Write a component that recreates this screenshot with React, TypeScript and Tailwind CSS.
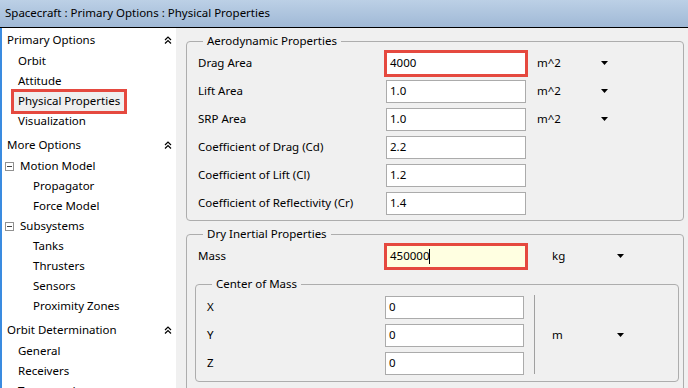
import type { ReactNode } from "react";

const font = { fontFamily: '"Segoe UI", "Noto Sans", "Liberation Sans", sans-serif' };

function CollapseIcon() {
  return (
    <svg width="8" height="8" viewBox="0 0 8 8" className="shrink-0">
      <path d="M1 4 L4 1 L7 4 M1 7.5 L4 4.5 L7 7.5" fill="none" stroke="#000" strokeWidth="1.2" />
    </svg>
  );
}

function MinusBox() {
  return (
    <span className="w-[9px] h-[9px] border border-[#919191] bg-white flex items-center justify-center ml-[3px] mr-[6px]">
      <span className="w-[5px] h-px bg-[#444]" />
    </span>
  );
}

function Arrow() {
  return (
    <svg width="7" height="4" viewBox="0 0 7 4">
      <path d="M0 0H7L3.5 4Z" fill="#000" />
    </svg>
  );
}

function SectionHeader({ label, className = "" }: { label: string; className?: string }) {
  return (
    <div className={`h-[22px] flex items-center justify-between pl-[5px] pr-[4px] ${className}`}>
      <span>{label}</span>
      <CollapseIcon />
    </div>
  );
}

function NavItem({ label, indent = 16, selected }: { label: string; indent?: number; selected?: boolean }) {
  return (
    <div className="h-[20px] flex items-center" style={{ paddingLeft: indent }}>
      {selected ? (
        <span className="h-[25px] -ml-[7px] px-[4px] flex items-center border-[3px] border-[#e5493f] bg-[#efefef]">
          {label}
        </span>
      ) : (
        <span>{label}</span>
      )}
    </div>
  );
}

function TreeNode({ label }: { label: string }) {
  return (
    <div className="h-[20px] flex items-center">
      <MinusBox />
      <span>{label}</span>
    </div>
  );
}

function Box({
  value,
  highlight,
  yellow,
  caret,
  width = 140,
}: {
  value: string;
  highlight?: boolean;
  yellow?: boolean;
  caret?: boolean;
  width?: number;
}) {
  if (highlight) {
    return (
      <div
        className={`h-[27px] -mx-[2px] border-[3px] border-[#e5493f] flex items-center pl-[3px] ${yellow ? "bg-[#ffffe1]" : "bg-white"}`}
        style={{ width: width + 4 }}
      >
        <span>{value}</span>
        {caret && <span className="w-px h-[15px] bg-black" />}
      </div>
    );
  }
  return (
    <div className="h-[23px] border border-[#ababab] bg-white flex items-center pl-[3px]" style={{ width }}>
      {value}
    </div>
  );
}

function Unit({ label, ml, w }: { label: string; ml: number; w: number }) {
  return (
    <div className="flex items-center justify-between" style={{ marginLeft: ml, width: w }}>
      <span>{label}</span>
      <Arrow />
    </div>
  );
}

function Row({ label, labelW = 188, children }: { label: string; labelW?: number; children: ReactNode }) {
  return (
    <div className="h-[28px] flex items-center">
      <span className="shrink-0" style={{ width: labelW }}>
        {label}
      </span>
      {children}
    </div>
  );
}

function Group({ title, className = "", children }: { title: string; className?: string; children: ReactNode }) {
  return (
    <fieldset className={`border border-[#adadad] rounded-[4px] ${className}`}>
      <legend className="ml-[5px] px-[4px] leading-[16px]">{title}</legend>
      {children}
    </fieldset>
  );
}

export default function App() {
  return (
    <div className="w-[688px] h-[388px] overflow-hidden flex flex-col text-[11.5px] text-black" style={font}>
      <div className="h-[28px] shrink-0 flex items-center pl-[5px] pb-px border-b border-black bg-gradient-to-b from-[#bcd0e6] to-[#a0b9d6]">
        Spacecraft : Primary Options : Physical Properties
      </div>

      <div className="flex flex-1 min-h-0">
        {/* sidebar */}
        <div className="w-[176px] shrink-0 bg-white border-l-2 border-[#3a8be0] leading-[16px] pt-[1px]">
          <SectionHeader label="Primary Options" />
          <NavItem label="Orbit" />
          <NavItem label="Attitude" />
          <NavItem label="Physical Properties" selected />
          <NavItem label="Visualization" />

          <SectionHeader label="More Options" className="mt-[3px]" />
          <TreeNode label="Motion Model" />
          <NavItem label="Propagator" indent={31} />
          <NavItem label="Force Model" indent={31} />
          <TreeNode label="Subsystems" />
          <NavItem label="Tanks" indent={31} />
          <NavItem label="Thrusters" indent={31} />
          <NavItem label="Sensors" indent={31} />
          <NavItem label="Proximity Zones" indent={31} />

          <SectionHeader label="Orbit Determination" className="mt-[3px]" />
          <NavItem label="General" />
          <NavItem label="Receivers" />
          <NavItem label="Transponders" />
        </div>

        {/* main */}
        <div className="flex-1 bg-[#f0f0f0] pl-[10px] pr-[4px]">
          <Group title="Aerodynamic Properties" className="mt-[5px] pl-[11px] pb-[3px]">
            <Row label="Drag Area">
              <Box value="4000" highlight />
              <Unit label="m^2" ml={11} w={71} />
            </Row>
            <Row label="Lift Area">
              <Box value="1.0" />
              <Unit label="m^2" ml={11} w={71} />
            </Row>
            <Row label="SRP Area">
              <Box value="1.0" />
              <Unit label="m^2" ml={11} w={71} />
            </Row>
            <Row label="Coefficient of Drag (Cd)">
              <Box value="2.2" />
            </Row>
            <Row label="Coefficient of Lift (Cl)">
              <Box value="1.2" />
            </Row>
            <Row label="Coefficient of Reflectivity (Cr)">
              <Box value="1.4" />
            </Row>
          </Group>

          <Group title="Dry Inertial Properties" className="mt-[5px] pl-[11px] pb-[10px]">
            <Row label="Mass">
              <Box value="450000" highlight yellow caret />
              <Unit label="kg" ml={26} w={72} />
            </Row>

            <Group title="Center of Mass" className="mt-[6px] -ml-[3px] mr-[4px] pl-[11px] pb-[4px]">
              <div className="flex">
                <div className="pt-[1px]">
                  <Row label="X" labelW={178}>
                    <Box value="0" width={139} />
                  </Row>
                  <Row label="Y" labelW={178}>
                    <Box value="0" width={139} />
                  </Row>
                  <Row label="Z" labelW={178}>
                    <Box value="0" width={139} />
                  </Row>
                </div>
                <div className="w-px bg-[#a0a0a0] my-[3px] ml-[10px]" />
                <div className="flex items-center">
                  <Unit label="m" ml={17} w={72} />
                </div>
              </div>
            </Group>
          </Group>
        </div>
      </div>
    </div>
  );
}
